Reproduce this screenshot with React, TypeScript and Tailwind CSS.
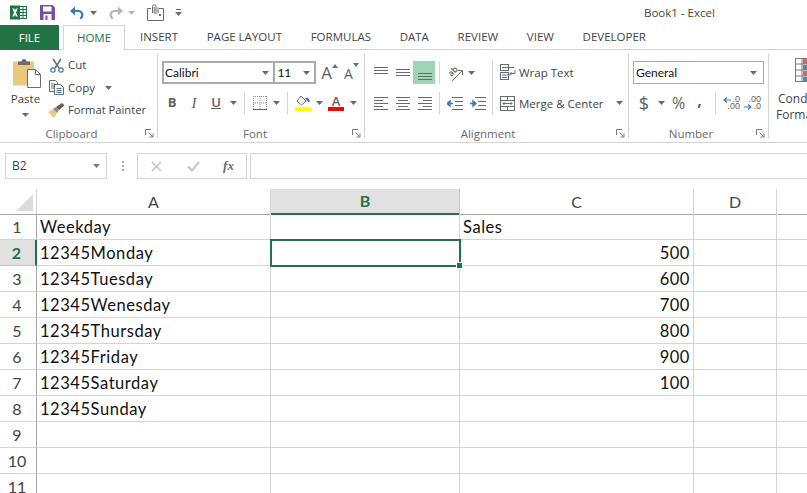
import React from "react";

const Caret = ({ c = "#6a6a6a" }: { c?: string }) => (
  <svg width="7" height="4" viewBox="0 0 7 4"><path d="M0 0h7L3.500 4z" fill={c} /></svg>
);

const Launcher = () => (
  <svg width="9" height="9" viewBox="0 0 9 9" fill="none" stroke="#7a7a7a">
    <path d="M.5 6V.5H6" /><path d="M3.500 3.500L8 8M8 4.500V8H4.500" />
  </svg>
);

const Lines = ({ rows }: { rows: number[][] }) => (
  <svg width="15" height="16" viewBox="0 0 15 16" stroke="#6a6a6a" strokeWidth="1">
    {rows.map((r, i) => <path key={i} d={`M${r[0]} ${r[2]+.5}H${r[1]}`} />)}
  </svg>
);

const Cell = ({ w, children }: { w: string; children?: React.ReactNode }) => (
  <div className={`${w} h-[22px] flex items-center justify-center shrink-0`}>{children}</div>
);

const VSep = () => <div className="w-px h-[22px] bg-[#d4d4d4]" />;

const Excel = () => (
  <svg width="17" height="15" viewBox="0 0 17 15">
    <rect x="6" y="1.500" width="10.500" height="12" fill="#fff" stroke="#217346" />
    <path d="M9 2v11M13 2v11M7 4.500h9M7 7.500h9M7 10.500h9" stroke="#217346" />
    <rect x="0" y="0.500" width="10" height="14" fill="#217346" />
    <path d="M2.300 3.500h1.900L5 5.400l.9-1.900h1.800L6 7.400l1.800 4H5.900L5 9.300l-.9 2.100H2.200l1.900-4z" fill="#fff" />
  </svg>
);

const Save = () => (
  <svg width="15" height="15" viewBox="0 0 15 15">
    <path d="M0 0h12.500L15 2.500V15H0z" fill="#7c4ea2" />
    <rect x="3" y="1.500" width="8.500" height="5" fill="#fff" />
    <rect x="3.500" y="9" width="8" height="6" fill="#fff" />
    <rect x="5.500" y="10.500" width="2" height="4.500" fill="#7c4ea2" />
  </svg>
);

const Undo = ({ c, flip }: { c: string; flip?: boolean }) => (
  <svg width="15" height="13" viewBox="0 0 15 13" style={flip ? { transform: "scaleX(-1)" } : undefined}>
    <path d="M2.500 5H9a4 4 0 0 1 1 7.600" fill="none" stroke={c} strokeWidth="2.200" />
    <path d="M0 5l5-4.500v9z" fill={c} />
  </svg>
);

const Touch = () => (
  <svg width="17" height="17" viewBox="0 0 17 17" fill="none" stroke="#6a6a6a">
    <path d="M.5 4.500H4M12 4.500h4.500v12H.5v-12" />
    <path d="M5.500 9V2.500a1.700 1.700 0 0 1 3.500 0V10M7.200 3v6.500M11 9V3.500" />
    <rect x="12" y="10" width="2" height="2" fill="#4a7ebb" stroke="none" />
  </svg>
);

const QuickCustom = () => (
  <svg width="7" height="7" viewBox="0 0 7 7"><path d="M1 .5h5" stroke="#6a6a6a" /><path d="M0 3h7L3.500 7z" fill="#6a6a6a" /></svg>
);

const PasteIcon = () => (
  <svg width="30" height="31" viewBox="0 0 30 31">
    <path d="M1 3.500h21v24H1z" fill="#eec77e" />
    <path d="M6 7V3.500h3.500a2.500 2.500 0 0 1 5 0H18V7z" fill="#6d6d6d" />
    <path d="M15.500 11.500h8l5 5v13h-13z" fill="#fff" stroke="#6d6d6d" />
    <path d="M23.500 11.500v5h5" fill="none" stroke="#6d6d6d" />
  </svg>
);

const Scissors = () => (
  <svg width="14" height="15" viewBox="0 0 14 15" fill="none">
    <path d="M3 1l6 9M11 1L5 10" stroke="#6a6a6a" strokeWidth="1.500" />
    <circle cx="3" cy="12" r="2.200" stroke="#3e7ab8" strokeWidth="1.200" />
    <circle cx="11" cy="12" r="2.200" stroke="#3e7ab8" strokeWidth="1.200" />
  </svg>
);

const CopyIcon = () => (
  <svg width="15" height="15" viewBox="0 0 15 15" fill="none">
    <path d="M.5 .5h6l2 2v9H.5z" stroke="#6a6a6a" fill="#fff" />
    <path d="M2 4h4M2 6h4M2 8h4" stroke="#6a6a6a" />
    <path d="M5.500 4.500h6l3 3v7h-9z" stroke="#6a6a6a" fill="#fff" />
    <path d="M7.500 8.500h5M7.500 10.500h5M7.500 12.500h5" stroke="#3e7ab8" />
  </svg>
);

const Painter = () => (
  <svg width="17" height="15" viewBox="0 0 17 15">
    <path d="M0 9l5-3 4 4-3 5z" fill="#eec77e" />
    <path d="M5 6l3-2 3 3-2 3z" fill="#8a8a8a" />
    <path d="M8 4l6-4 2.500 2.500-5.500 4.500z" fill="#5f5f5f" />
  </svg>
);

const BordersIcon = () => (
  <svg width="14" height="14" viewBox="0 0 14 14" fill="none" stroke="#8a8a8a" strokeDasharray="1 1">
    <path d="M.5 0v14M7 0v14M13.500 0v14M0 .5h14M0 7h14" />
    <path d="M0 13.500h14" strokeDasharray="none" stroke="#6a6a6a" />
  </svg>
);

const FillIcon = () => (
  <svg width="16" height="16" viewBox="0 0 16 16">
    <path d="M6 1l5 5-4.500 4L2 6z" fill="#fff" stroke="#6a6a6a" />
    <path d="M10 3h3l2 3-1 1.500L12 6z" fill="#3e7ab8" />
    <rect x="0" y="12" width="16" height="4" fill="#ffff00" />
  </svg>
);

const FontColorIcon = () => (
  <div className="flex flex-col items-center w-4 leading-none">
    <span className="text-[13px] leading-[12px] font-semibold text-[#5f5f5f]">A</span>
    <div className="w-4 h-1 bg-[#ff0000]" />
  </div>
);

const GrowA = ({ up }: { up: boolean }) => (
  <div className="flex items-start">
    <span className={`${up ? "text-[17px]" : "text-[14px] mt-[2px]"} leading-[20px] text-[#5f5f5f]`}>A</span>
    <svg className="mt-[1px]" width="6" height="4" viewBox="0 0 6 4">
      <path d={up ? "M0 4h6L3 0z" : "M0 0h6L3 4z"} fill="#3e7ab8" />
    </svg>
  </div>
);

const Orientation = () => (
  <svg width="17" height="17" viewBox="0 0 17 17" fill="none" stroke="#6a6a6a">
    <text x="2" y="11" transform="rotate(-45 6 8)" fontSize="8.500" fontWeight="600" fill="#5f5f5f" stroke="none">ab</text>
    <path d="M6 17L16 7M12 6.500h4.500V11" />
  </svg>
);

const IndentIcon = ({ inc }: { inc?: boolean }) => (
  <svg width="16" height="15" viewBox="0 0 16 15" fill="none">
    <path d="M5 1.500h11M8 5.500h8M8 9.500h8M5 13.500h11" stroke="#6a6a6a" />
    <path d={inc ? "M0 7.500h4M3 5l3 2.500L3 10z" : "M6 7.500H2M3 5L0 7.500 3 10z"} stroke="#3e7ab8" fill="#3e7ab8" strokeWidth="1.400" />
  </svg>
);

const WrapIcon = () => (
  <svg width="16" height="17" viewBox="0 0 16 17" fill="none">
    <rect x=".5" y=".5" width="8" height="6" stroke="#6a6a6a" />
    <rect x=".5" y="8.500" width="8" height="7" stroke="#6a6a6a" />
    <path d="M2 3.500h12M2 11h8M2 13.500h5" stroke="#3e7ab8" />
    <path d="M15 6v3.500H10M11.500 8L10 9.500l1.500 1.500" stroke="#3e7ab8" />
  </svg>
);

const MergeIcon = () => (
  <svg width="15" height="15" viewBox="0 0 15 15" fill="none">
    <rect x=".5" y=".5" width="14" height="14" stroke="#6a6a6a" />
    <path d="M0 4.500h15M0 10.500h15M7.500 1v3M7.500 11v3" stroke="#6a6a6a" />
    <path d="M3 7.500h9M4.500 6L3 7.500 4.500 9M10.500 6L12 7.500 10.500 9" stroke="#3e7ab8" />
  </svg>
);

const Decimal = ({ inc }: { inc?: boolean }) => (
  <div className="flex flex-col items-end w-[17px] text-[9px] leading-[7px] text-[#5f5f5f] font-['Liberation_Sans',sans-serif]">
    {inc ? (
      <>
        <span>.00</span>
        <span className="flex items-center gap-[1px]">
          <svg width="8" height="6" viewBox="0 0 8 6"><path d="M0 3h6M4 .5L7 3 4 5.500" stroke="#3e7ab8" strokeWidth="1.200" fill="none" /></svg>.0
        </span>
      </>
    ) : (
      <>
        <span className="flex items-center gap-[1px]">
          <svg width="8" height="6" viewBox="0 0 8 6"><path d="M8 3H2M4 .5L1 3l3 2.500" stroke="#3e7ab8" strokeWidth="1.200" fill="none" /></svg>.0
        </span>
        <span>.00</span>
      </>
    )}
  </div>
);

const CondIcon = () => (
  <svg width="14" height="24" viewBox="0 0 14 24">
    <rect x=".5" y=".5" width="13" height="23" fill="#fff" stroke="#7a7a7a" />
    <path d="M7 0v24M0 6h14M0 12h14M0 18h14" stroke="#7a7a7a" />
    <rect x="8" y="1" width="6" height="5" fill="#d9694b" />
    <rect x="8" y="7" width="6" height="5" fill="#4f85c2" />
    <rect x="8" y="13" width="6" height="5" fill="#d9694b" />
    <rect x="8" y="19" width="6" height="5" fill="#4f85c2" />
  </svg>
);

const tabs = ["INSERT", "PAGE LAYOUT", "FORMULAS", "DATA", "REVIEW", "VIEW", "DEVELOPER"];

const GroupLabel = ({ text, launcher, pad }: { text: string; launcher?: boolean; pad: string }) => (
  <div className="h-[9px] flex items-center leading-[9px]">
    <div className={`flex-1 text-center text-[#6a6a6a] text-[11.5px] ${pad}`}>{text}</div>
    {launcher && <div className="mr-[3px] flex"><Launcher /></div>}
  </div>
);

const rows: [string, string, string][] = [
  ["Weekday", "Sales", ""],
  ["12345Monday", "", "500"],
  ["12345Tuesday", "", "600"],
  ["12345Wenesday", "", "700"],
  ["12345Thursday", "", "800"],
  ["12345Friday", "", "900"],
  ["12345Saturday", "", "100"],
  ["12345Sunday", "", ""],
  ["", "", ""],
  ["", "", ""],
  ["", "", ""],
];

const gridCols = "grid grid-cols-[37px_234px_189px_234px_83px_1fr]";
const cellCls = "h-[26px] border-r border-b border-[#d4d4d4] flex items-center text-[16.5px] tracking-[0.55px] leading-[24px] text-[#111] overflow-visible whitespace-nowrap";

export default function App() {
  return (
    <div className="w-[807px] h-[493px] overflow-hidden bg-white font-['Open_Sans',sans-serif] text-[11.5px] text-[#444]">
      {/* Title bar */}
      <div className="h-[25px] flex items-center pl-[10px]">
        <Excel />
        <div className="ml-[13px] flex"><Save /></div>
        <div className="ml-[15px] flex"><Undo c="#3e7ab8" /></div>
        <div className="ml-[5px] flex"><Caret /></div>
        <div className="ml-[11px] flex"><Undo c="#b5b5b5" flip /></div>
        <div className="ml-[5px] flex"><Caret c="#b5b5b5" /></div>
        <div className="ml-[12px] flex"><Touch /></div>
        <div className="ml-[11px] flex"><QuickCustom /></div>
        <span className="ml-[462px] whitespace-nowrap">Book1 - Excel</span>
      </div>

      {/* Tabs */}
      <div className="h-[25px] flex border-b border-[#d4d4d4]">
        <div className="w-[59px] h-[25px] bg-[#217346] text-white flex items-center justify-center shrink-0">FILE</div>
        <div className="ml-[4px] w-[62px] h-[25px] bg-white border border-b-0 border-[#d4d4d4] text-[#217346] flex items-center justify-center shrink-0">HOME</div>
        <div className="ml-[15px] flex items-center gap-[28.7px] whitespace-nowrap">
          {tabs.map((t) => <span key={t}>{t}</span>)}
        </div>
      </div>

      {/* Ribbon */}
      <div className="h-[93px] flex border-b border-[#d4d4d4] overflow-hidden">
        {/* Clipboard */}
        <div className="w-[158px] mt-1 h-[84px] border-r border-[#d4d4d4] shrink-0 flex flex-col">
          <div className="h-[75px] flex">
            <div className="w-[48px] flex flex-col items-center shrink-0">
              <div className="mt-1 ml-[6px]"><PasteIcon /></div>
              <span className="mt-[1px] leading-[18px] pl-[3px]">Paste</span>
              <div className="mt-[5px] flex pl-[2px]"><Caret /></div>
            </div>
            <div className="flex flex-col">
              <div className="h-[22px] flex items-center ml-[2px] gap-[4px]"><Scissors /><span>Cut</span></div>
              <div className="h-[23px] flex items-center ml-[1px] gap-[4px]"><CopyIcon /><span>Copy</span><div className="ml-[6px] flex"><Caret /></div></div>
              <div className="h-[22px] flex items-center gap-[3px] whitespace-nowrap"><Painter /><span className="text-[11.2px]">Format Painter</span></div>
            </div>
          </div>
          <GroupLabel text="Clipboard" launcher pad="pr-[2px]" />
        </div>

        {/* Font */}
        <div className="w-[207px] mt-1 h-[84px] border-r border-[#d4d4d4] shrink-0 flex flex-col">
          <div className="h-[75px] flex flex-col pl-[3px]">
            <div className="mt-[7px] h-[23px] flex items-center">
              <div className="ml-[1px] w-[112px] h-[23px] border-2 border-[#ababab] border-r-0 flex items-center justify-between pl-[1px] pr-[4px] font-['Lato',sans-serif] text-[12px] text-[#111]">
                Calibri<Caret />
              </div>
              <div className="w-[43px] h-[23px] border-2 border-[#ababab] flex items-center justify-between pl-[2px] pr-[4px] font-['Lato',sans-serif] text-[12px] text-[#111]">
                11<Caret />
              </div>
              <div className="ml-[5px] w-[20px] flex"><GrowA up /></div>
              <div className="ml-[3px] w-[20px] flex"><GrowA up={false} /></div>
            </div>
            <div className="mt-[8px] h-[22px] flex items-center text-[13px] text-[#5f5f5f]">
              <Cell w="w-[22px]"><span className="font-bold">B</span></Cell>
              <Cell w="w-[22px]"><span className="italic font-['Liberation_Serif',serif] text-[15px]">I</span></Cell>
              <Cell w="w-[22px]"><span className="underline font-semibold">U</span></Cell>
              <Cell w="w-[12px]"><Caret /></Cell>
              <Cell w="w-[10px]"><VSep /></Cell>
              <Cell w="w-[22px]"><BordersIcon /></Cell>
              <Cell w="w-[11px]"><Caret /></Cell>
              <Cell w="w-[10px]"><VSep /></Cell>
              <Cell w="w-[22px]"><FillIcon /></Cell>
              <Cell w="w-[10px]"><Caret /></Cell>
              <Cell w="w-[24px]"><FontColorIcon /></Cell>
              <Cell w="w-[10px]"><Caret /></Cell>
            </div>
          </div>
          <GroupLabel text="Font" launcher pad="pl-0" />
        </div>

        {/* Alignment */}
        <div className="w-[264px] mt-1 h-[84px] border-r border-[#d4d4d4] shrink-0 flex flex-col">
          <div className="h-[75px] flex pl-[4px]">
            <div className="flex flex-col">
              <div className="mt-[7px] h-[23px] flex items-center">
                <Cell w="w-[22px]"><Lines rows={[[1, 15, 2], [1, 15, 5], [1, 15, 8]]} /></Cell>
                <Cell w="w-[22px]"><Lines rows={[[1, 15, 4], [1, 15, 7], [1, 15, 10]]} /></Cell>
                <div className="w-[22px] h-[23px] bg-[#9fd5b7] flex items-center justify-center"><Lines rows={[[1, 15, 8], [1, 15, 11], [1, 15, 14]]} /></div>
                <Cell w="w-[8px]"><VSep /></Cell>
                <Cell w="w-[23px]"><Orientation /></Cell>
                <Cell w="w-[10px]"><Caret /></Cell>
              </div>
              <div className="mt-[8px] h-[22px] flex items-center">
                <Cell w="w-[22px]"><Lines rows={[[1, 15, 2], [1, 10, 5], [1, 15, 8], [1, 10, 11], [1, 15, 14]]} /></Cell>
                <Cell w="w-[22px]"><Lines rows={[[1, 15, 2], [3, 13, 5], [1, 15, 8], [3, 13, 11], [1, 15, 14]]} /></Cell>
                <Cell w="w-[22px]"><Lines rows={[[1, 15, 2], [6, 15, 5], [1, 15, 8], [6, 15, 11], [1, 15, 14]]} /></Cell>
                <Cell w="w-[8px]"><VSep /></Cell>
                <Cell w="w-[23px]"><IndentIcon /></Cell>
                <Cell w="w-[23px]"><IndentIcon inc /></Cell>
              </div>
            </div>
            <div className="ml-[3px] mt-[6px] w-px h-[55px] bg-[#d4d4d4]" />
            <div className="ml-[7px] flex flex-col whitespace-nowrap">
              <div className="mt-[7px] h-[23px] flex items-center gap-[3px]"><WrapIcon /><span>Wrap Text</span></div>
              <div className="mt-[8px] h-[22px] flex items-center gap-[4px]"><MergeIcon /><span className="pt-[1px]">Merge &amp; Center</span><div className="ml-[8px] flex"><Caret /></div></div>
            </div>
          </div>
          <GroupLabel text="Alignment" launcher pad="pl-0 pr-[5px]" />
        </div>

        {/* Number */}
        <div className="w-[140px] mt-1 h-[84px] border-r border-[#d4d4d4] shrink-0 flex flex-col">
          <div className="h-[75px] flex flex-col pl-[4px]">
            <div className="mt-[7px] w-[131px] h-[23px] border border-[#ababab] flex items-center justify-between pl-[2px] pr-[6px] font-['Lato',sans-serif] text-[12px] text-[#111]">
              General<Caret />
            </div>
            <div className="mt-[8px] h-[22px] flex items-center text-[#5f5f5f]">
              <Cell w="w-[22px]"><span className="text-[18px]">$</span></Cell>
              <Cell w="w-[12px]"><Caret /></Cell>
              <Cell w="w-[23px]"><span className="text-[16px]">%</span></Cell>
              <Cell w="w-[19px]"><span className="text-[16px] font-bold leading-[12px] mb-[7px]">,</span></Cell>
              <Cell w="w-[12px]"><VSep /></Cell>
              <Cell w="w-[21px]"><Decimal /></Cell>
              <Cell w="w-[21px]"><Decimal inc /></Cell>
            </div>
          </div>
          <GroupLabel text="Number" launcher pad="pr-[3px]" />
        </div>

        {/* Styles */}
        <div className="mt-1 flex flex-col pl-[9px] whitespace-nowrap leading-[16px] text-[12px]">
          <div className="ml-[17px] mt-[4px] h-[28px]"><CondIcon /></div>
          <span className="mt-[5px]">Cond</span>
          <span className="-ml-[2px]">Forma</span>
        </div>
      </div>

      {/* Formula bar */}
      <div className="mt-[10px] h-[26px] flex items-stretch">
        <div className="ml-[5px] w-[102px] border border-[#d4d4d4] flex items-center justify-between pl-[6px] pr-[6px] text-[12px]">
          <span>B2</span><Caret c="#7a7a7a" />
        </div>
        <div className="ml-[13px] w-[5px] flex flex-col justify-center gap-[2px] items-center">
          <div className="w-[2px] h-[2px] bg-[#a8a8a8]" />
          <div className="w-[2px] h-[2px] bg-[#a8a8a8]" />
          <div className="w-[2px] h-[2px] bg-[#a8a8a8]" />
        </div>
        <div className="ml-[12px] w-[110px] border border-[#d4d4d4] flex items-center">
          <Cell w="w-[37px]">
            <svg width="11" height="11" viewBox="0 0 11 11"><path d="M1 1l9 9M10 1l-9 9" stroke="#c6c6c6" strokeWidth="1.600" /></svg>
          </Cell>
          <Cell w="w-[36px]">
            <svg width="13" height="11" viewBox="0 0 13 11"><path d="M1 5.500l4 4 7-8.500" stroke="#c6c6c6" strokeWidth="2" fill="none" /></svg>
          </Cell>
          <Cell w="w-[35px]"><span className="font-['Liberation_Serif',serif] italic font-bold text-[13px] text-[#6a6a6a]">fx</span></Cell>
        </div>
        <div className="ml-[3px] flex-1 border border-r-0 border-[#d4d4d4]" />
      </div>

      {/* Sheet */}
      <div className="mt-[10px] font-['Lato',sans-serif]">
        <div className={`${gridCols} h-[25px] text-[16px] text-[#444]`}>
          <div className="border-r border-r-[#d4d4d4] border-b border-b-[#a6a6a6] flex items-end justify-end pr-[3px] pb-[3px]">
            <svg width="17" height="17" viewBox="0 0 17 17"><path d="M17 0v17H0z" fill="#dcdcdc" /></svg>
          </div>
          <div className="border-r border-r-[#d4d4d4] border-b border-b-[#a6a6a6] flex items-center justify-center">A</div>
          <div className="bg-[#e1e1e1] border-r border-r-[#c6c6c6] border-b-2 border-b-[#217346] flex items-center justify-center font-bold text-[#217346]">B</div>
          <div className="border-r border-r-[#d4d4d4] border-b border-b-[#a6a6a6] flex items-center justify-center">C</div>
          <div className="border-r border-r-[#d4d4d4] border-b border-b-[#a6a6a6] flex items-center justify-center">D</div>
          <div className="border-b border-b-[#a6a6a6]" />
        </div>
        {rows.map((r, i) => {
          const sel = i === 1;
          return (
            <div key={i} className={gridCols}>
              <div className={`h-[26px] border-b flex items-center justify-center text-[16px] pr-[2px] ${sel ? "bg-[#e1e1e1] border-b-[#c6c6c6] border-r-2 border-r-[#217346] font-bold text-[#217346]" : "border-r border-r-[#a6a6a6] border-b-[#d4d4d4] text-[#444]"}`}>{i + 1}</div>
              <div className={`${cellCls} pl-[3px]`}>{r[0]}</div>
              <div className={`${cellCls} relative`}>
                {sel && (
                  <div className="absolute z-10 -left-[1px] -top-[1px] w-[191px] h-[28px] border-2 border-[#217346]">
                    <div className="absolute -right-[4px] -bottom-[4px] w-[7px] h-[7px] bg-[#217346] border border-white" />
                  </div>
                )}
              </div>
              <div className={`${cellCls} pl-[3px] ${r[2] ? "justify-end pr-[3px]" : ""}`}>{r[2] || r[1]}</div>
              <div className={cellCls} />
              <div className="h-[26px] border-b border-[#d4d4d4]" />
            </div>
          );
        })}
      </div>
    </div>
  );
}
